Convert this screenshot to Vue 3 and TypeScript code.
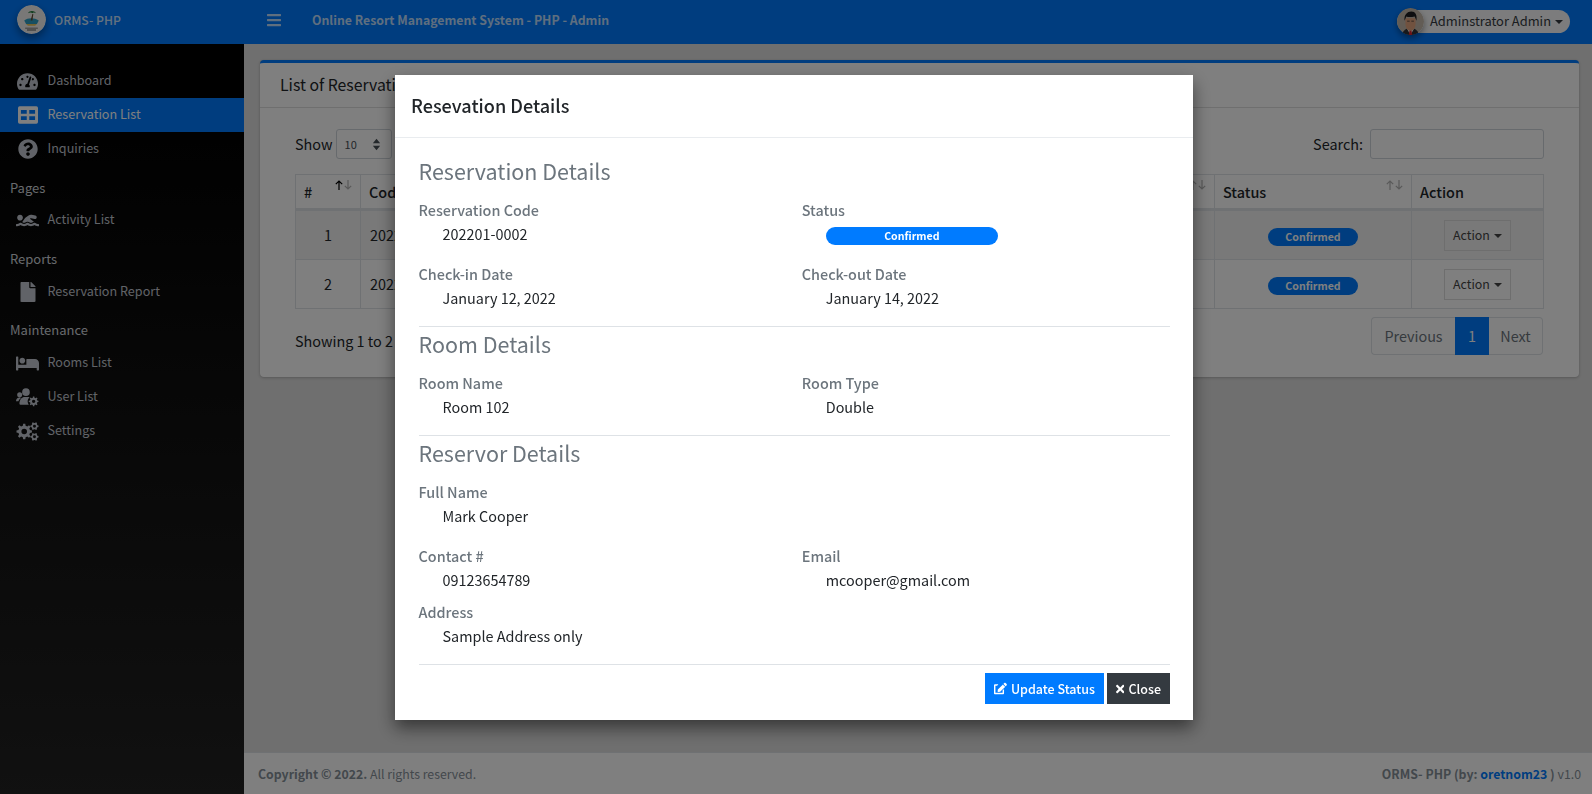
<template>
  <div class="layout">
    <!-- Sidebar -->
    <aside class="sidebar">
      <div class="brand">
        <svg class="brand-logo" viewBox="0 0 32 32">
          <circle cx="16" cy="16" r="16" fill="#f2f1ee" />
          <path d="M8 17c4-3 11-3 16 0l-2 4H10z" fill="#2f9fc4" />
          <path d="M10 21h12l-2 2h-8z" fill="#e8c35a" />
          <path d="M15 17l2-7 1 0-1 7z" fill="#5b4630" />
          <path d="M12 9c2-3 7-3 9 0-2-1-3-1-4 0-1-1-3-1-5 0z" fill="#1f7a3d" />
          <path d="M9 25h14v1H9zm2 2h10v1H11z" fill="#555" />
        </svg>
        <span class="brand-text">ORMS- PHP</span>
      </div>
      <nav class="nav">
        <template
          v-for="entry in navEntries"
          :key="entry.label"
        >
          <div
            v-if="entry.header"
            class="nav-header"
          >
            {{ entry.label }}
          </div>
          <a
            v-else
            class="nav-link"
            :class="{ active: entry.active }"
          >
            <span class="nav-icon">
              <svg
                :viewBox="entry.box"
                :width="entry.size"
                :height="entry.size"
                fill="currentColor"
              >
                <path :d="entry.path" />
              </svg>
            </span>
            <span class="nav-label">{{ entry.label }}</span>
          </a>
        </template>
      </nav>
    </aside>

    <div class="main">
      <!-- Top bar -->
      <header class="navbar">
        <svg
          class="bars"
          viewBox="0 0 448 512"
          fill="currentColor"
        >
          <path d="M16 132h416c8.837 0 16-7.163 16-16V76c0-8.837-7.163-16-16-16H16C7.163 60 0 67.163 0 76v40c0 8.837 7.163 16 16 16zm0 160h416c8.837 0 16-7.163 16-16v-40c0-8.837-7.163-16-16-16H16c-8.837 0-16 7.163-16 16v40c0 8.837 7.163 16 16 16zm0 160h416c8.837 0 16-7.163 16-16v-40c0-8.837-7.163-16-16-16H16c-8.837 0-16 7.163-16 16v40c0 8.837 7.163 16 16 16z" />
        </svg>
        <span class="navbar-title">Online Resort Management System - PHP - Admin</span>
        <div class="user-menu">
          <svg class="avatar" viewBox="0 0 32 32">
            <circle cx="16" cy="16" r="16" fill="#c4b8aa" />
            <path d="M6 32c1-6 5-8 10-8s9 2 10 8z" fill="#2f3238" />
            <path d="M12 25h8l-4 7z" fill="#f4f4f4" />
            <path d="M15 26h2l1 6h-4z" fill="#d8262c" />
            <path d="M10 12h12v7c0 5-3 8-6 8s-6-3-6-8z" fill="#e2a57f" />
            <path d="M9 15c-1-7 3-11 8-11s7 4 6 11l-2-5c-4 1-8 1-10 0z" fill="#1d1d20" />
            <path d="M12 15h3v1h-3zm5 0h3v1h-3z" fill="#33302e" />
          </svg>
          <span class="user-name">Adminstrator Admin</span>
          <span class="caret" />
        </div>
      </header>

      <!-- Page content, behind the modal -->
      <main class="content">
        <section class="card">
          <div class="card-header">
            List of Reservations
          </div>
          <div class="card-body">
            <div class="table-tools">
              <label class="length">Show
                <span class="select">
                  10
                  <svg
                    viewBox="0 0 10 16"
                    width="9"
                    height="13"
                    fill="currentColor"
                  >
                    <path d="M5 1l4.500 5.500H.5zm0 14L.5 9.500h9z" />
                  </svg>
                </span>
              </label>
              <label class="search">Search:
                <span class="search-input" />
              </label>
            </div>
            <table class="table">
              <colgroup>
                <col
                  v-for="col in columns"
                  :key="col.label"
                  :class="col.cls"
                >
              </colgroup>
              <thead>
                <tr>
                  <th
                    v-for="col in columns"
                    :key="col.label"
                  >
                    {{ col.label }}
                    <svg
                      v-if="col.sort"
                      class="sort"
                      viewBox="0 0 17 10"
                      fill="none"
                      stroke="currentColor"
                      stroke-width="1.200"
                    >
                      <path
                        :class="{ on: col.label === '#' }"
                        d="M4 10V1M.8 4.200L4 1l3.200 3.200"
                      />
                      <path d="M13 0v9M9.800 5.800L13 9l3.200-3.200" />
                    </svg>
                  </th>
                </tr>
              </thead>
              <tbody>
                <tr
                  v-for="(row, i) in rows"
                  :key="row.code"
                >
                  <td class="center">
                    {{ i + 1 }}
                  </td>
                  <td>{{ row.code }}</td>
                  <td>{{ row.room }}</td>
                  <td class="center">
                    <span class="badge">Confirmed</span>
                  </td>
                  <td class="center">
                    <span class="action-btn">Action<span class="caret" /></span>
                  </td>
                </tr>
              </tbody>
            </table>
            <div class="table-foot">
              <span class="table-info">Showing 1 to 2 of 2 entries</span>
              <div class="pagination">
                <span class="page prev">Previous</span>
                <span class="page current">1</span>
                <span class="page next">Next</span>
              </div>
            </div>
          </div>
        </section>
      </main>

      <footer class="footer">
        <span><strong>Copyright © 2022.</strong> All rights reserved.</span>
        <span><strong>ORMS- PHP (by: <a class="author">oretnom23</a> )</strong> v1.0</span>
      </footer>
    </div>

    <!-- Modal -->
    <div class="backdrop">
      <div class="modal">
        <div class="modal-header">
          Resevation Details
        </div>
        <div class="modal-body">
          <h4 class="section-title">
            Reservation Details
          </h4>
          <div class="fields">
            <dl class="field">
              <dt>Reservation Code</dt>
              <dd>202201-0002</dd>
            </dl>
            <dl class="field">
              <dt>Status</dt>
              <dd><span class="badge wide">Confirmed</span></dd>
            </dl>
            <dl class="field">
              <dt>Check-in Date</dt>
              <dd>January 12, 2022</dd>
            </dl>
            <dl class="field">
              <dt>Check-out Date</dt>
              <dd>January 14, 2022</dd>
            </dl>
          </div>
          <hr>
          <h4 class="section-title">
            Room Details
          </h4>
          <div class="fields">
            <dl class="field">
              <dt>Room Name</dt>
              <dd>Room 102</dd>
            </dl>
            <dl class="field">
              <dt>Room Type</dt>
              <dd>Double</dd>
            </dl>
          </div>
          <hr>
          <h4 class="section-title">
            Reservor Details
          </h4>
          <div class="fields">
            <dl class="field full">
              <dt>Full Name</dt>
              <dd>Mark Cooper</dd>
            </dl>
            <dl class="field tight">
              <dt>Contact #</dt>
              <dd>09123654789</dd>
            </dl>
            <dl class="field tight">
              <dt>Email</dt>
              <dd>mcooper@gmail.com</dd>
            </dl>
            <dl class="field full">
              <dt>Address</dt>
              <dd>Sample Address only</dd>
            </dl>
          </div>
          <hr>
          <div class="modal-actions">
            <button class="btn primary">
              <svg
                viewBox="0 0 576 512"
                width="17"
                height="15"
                fill="currentColor"
              >
                <path d="M402.6 83.2l90.2 90.2c3.8 3.8 3.8 10 0 13.8L274.4 405.6l-92.8 10.3c-12.4 1.4-22.9-9.1-21.5-21.5l10.3-92.8L388.8 83.2c3.8-3.8 10-3.8 13.8 0zm162-22.9l-48.8-48.8c-15.2-15.2-39.9-15.2-55.2 0l-35.4 35.4c-3.8 3.8-3.8 10 0 13.8l90.2 90.2c3.8 3.8 10 3.8 13.8 0l35.4-35.4c15.2-15.3 15.2-40 0-55.2zM384 346.2V448H64V128h73.1c3.2 0 6.2-1.3 8.5-3.5l40-40c7.6-7.6 2.2-20.5-8.5-20.5H48C21.5 64 0 85.5 0 112v352c0 26.5 21.5 48 48 48h352c26.5 0 48-21.5 48-48V306.2c0-10.7-12.9-16-20.5-8.5l-40 40c-2.2 2.3-3.5 5.3-3.5 8.5z" />
              </svg>
              Update Status
            </button>
            <button class="btn dark">
              <svg
                viewBox="0 80 352 352"
                width="12"
                height="12"
                fill="currentColor"
              >
                <path d="M242.72 256l100.07-100.07c12.28-12.28 12.28-32.19 0-44.48l-22.24-22.24c-12.28-12.28-32.19-12.28-44.48 0L176 189.28 75.93 89.21c-12.28-12.28-32.19-12.28-44.48 0L9.21 111.45c-12.28 12.28-12.28 32.19 0 44.48L109.28 256 9.21 356.07c-12.28 12.28-12.28 32.19 0 44.48l22.24 22.24c12.28 12.28 32.2 12.28 44.48 0L176 322.72l100.07 100.07c12.28 12.28 32.2 12.28 44.48 0l22.24-22.24c12.28-12.28 12.28-32.19 0-44.48L242.72 256z" />
              </svg>
              Close
            </button>
          </div>
        </div>
      </div>
    </div>
  </div>
</template>

<script setup lang="ts">
interface NavEntry {
  label: string
  header?: boolean
  active?: boolean
  box?: string
  size?: number
  path?: string
}

// teeth of a gear as a single path, with a hole in the middle
function gear(cx: number, cy: number, r: number, hole: number, teeth = 8): string {
  const pts: string[] = []
  const step = (Math.PI * 2) / teeth
  for (let i = 0; i < teeth; i++) {
    const a = i * step
    const offsets: [number, number][] = [
      [-0.3, 0.76],
      [-0.17, 1],
      [0.17, 1],
      [0.3, 0.76],
    ]
    for (const [o, k] of offsets) {
      const x = cx + Math.cos(a + o * step) * r * k
      const y = cy + Math.sin(a + o * step) * r * k
      pts.push(`${x.toFixed(1)} ${y.toFixed(1)}`)
    }
  }
  const ring = `M${cx - hole} ${cy}a${hole} ${hole} 0 1 0 ${hole * 2} 0a${hole} ${hole} 0 1 0 ${-hole * 2} 0z`
  return `M${pts.join('L')}z${ring}`
}

const usersCog =
  'M8 5a5 5 0 1 1 10 0a5 5 0 1 1-10 0z' +
  'M1.500 8.500a3.300 3.300 0 1 1 6.600 0a3.300 3.300 0 1 1-6.600 0z' +
  'M0 17c0-3 2-5 4.500-5 .8 0 1.500.2 2 .5-1.500 1.200-3 2.800-3.300 4.500H0z' +
  'M4.500 20c0-5 3-8.500 7-8.500h4c.8 0 1.500.1 2.200.4-1.500 1-2.500 2.900-2.500 5.100 0 1.700.6 3.300 1.600 4.500H6.500c-1.200 0-2-.8-2-1.500z' +
  gear(23, 17, 6.400, 2.200)

const cogs = gear(10, 12.5, 9.5, 3.400) + gear(22.5, 6, 5, 1.800, 6) + gear(22.5, 19, 5, 1.800, 6)

const navEntries: NavEntry[] = [
  {
    label: 'Dashboard',
    box: '0 0 576 512',
    size: 21,
    path: 'M288 32C128.94 32 0 160.94 0 320c0 52.8 14.25 102.26 39.06 144.8 5.61 9.62 16.3 15.2 27.44 15.2h443c11.14 0 21.83-5.58 27.44-15.2C561.75 422.26 576 372.8 576 320c0-159.06-128.94-288-288-288zm0 64c14.71 0 26.58 10.13 30.32 23.65-1.11 2.26-2.64 4.23-3.45 6.67l-9.22 27.67c-5.13 3.49-10.97 6.01-17.64 6.01-17.67 0-32-14.33-32-32S270.33 96 288 96zM96 384c-17.67 0-32-14.33-32-32s14.33-32 32-32 32 14.33 32 32-14.33 32-32 32zm48-160c-17.67 0-32-14.33-32-32s14.33-32 32-32 32 14.33 32 32-14.33 32-32 32zm246.77-72.41l-61.33 184C343.13 347.33 352 364.54 352 384c0 11.72-3.38 22.55-8.88 32H232.88c-5.5-9.45-8.88-20.28-8.88-32 0-33.94 26.5-61.43 59.9-63.59l61.34-184.01c4.17-12.56 17.73-19.45 30.36-15.17 12.57 4.19 19.35 17.79 15.17 30.36zm14.66 57.2l15.52-46.55c3.47-1.29 7.13-2.23 11.05-2.23 17.67 0 32 14.33 32 32s-14.33 32-32 32c-11.38-.01-20.89-6.28-26.57-15.22zM480 384c-17.67 0-32-14.33-32-32s14.33-32 32-32 32 14.33 32 32-14.33 32-32 32z',
  },
  {
    label: 'Reservation List',
    active: true,
    box: '0 0 24 24',
    size: 20,
    path: 'M2 1.500h20a2 2 0 0 1 2 2v17a2 2 0 0 1-2 2H2a2 2 0 0 1-2-2v-17a2 2 0 0 1 2-2zM3.500 6v4.500h7V6zm10 0v4.500h7V6zm-10 7.500V18h7v-4.500zm10 0V18h7v-4.500z',
  },
  {
    label: 'Inquiries',
    box: '0 0 512 512',
    size: 20,
    path: 'M504 256c0 136.997-111.043 248-248 248S8 392.997 8 256C8 119.083 119.043 8 256 8s248 111.083 248 248zM262.655 90c-54.497 0-89.255 22.957-116.549 63.758-3.536 5.286-2.353 12.415 2.715 16.258l34.699 26.31c5.205 3.947 12.621 3.008 16.665-2.122 17.864-22.658 30.113-35.797 57.303-35.797 20.429 0 45.698 13.148 45.698 32.958 0 14.976-12.363 22.667-32.534 33.976C247.128 238.528 216 254.941 216 296v4c0 6.627 5.373 12 12 12h56c6.627 0 12-5.373 12-12v-1.333c0-28.462 83.186-29.647 83.186-106.667 0-58.002-60.165-102-116.531-102zM256 338c-25.365 0-46 20.635-46 46 0 25.364 20.635 46 46 46s46-20.636 46-46c0-25.365-20.635-46-46-46z',
  },
  { label: 'Pages', header: true },
  {
    label: 'Activity List',
    box: '0 0 640 512',
    size: 23,
    path: 'M189.61 310.58c3.54 3.26 15.27 9.42 34.39 9.42s30.86-6.16 34.39-9.42c16.02-14.77 34.5-22.58 53.46-22.58h16.3c18.96 0 37.45 7.81 53.46 22.58 3.54 3.26 15.27 9.42 34.39 9.42s30.86-6.16 34.39-9.42c14.86-13.71 31.88-21.12 49.39-22.16l-112.84-80.6 18-12.86c3.64-2.58 8.28-3.52 12.62-2.61l100.35 21.53c25.91 5.53 51.44-10.97 57-36.88 5.55-25.92-10.95-51.44-36.88-57L437.68 98.47c-30.73-6.58-63.02.12-88.56 18.38l-80.02 57.17c-10.38 7.39-19.36 16.44-26.72 26.94L173.75 299c5.47 3.23 10.82 6.93 15.86 11.58zM624 352h-16c-26.04 0-45.8-8.42-56.09-17.9-8.9-8.21-19.66-14.1-31.77-14.1h-16.3c-12.11 0-22.87 5.89-31.77 14.1C461.8 343.58 442.04 352 416 352s-45.8-8.42-56.09-17.9c-8.9-8.21-19.66-14.1-31.77-14.1h-16.3c-12.11 0-22.87 5.89-31.77 14.1C269.8 343.58 250.04 352 224 352s-45.8-8.42-56.09-17.9c-8.9-8.21-19.66-14.1-31.77-14.1h-16.3c-12.11 0-22.87 5.89-31.77 14.1C77.8 343.58 58.04 352 32 352H16c-8.84 0-16 7.16-16 16v32c0 8.84 7.16 16 16 16h16c38.62 0 72.72-12.19 96-31.84 23.28 19.66 57.38 31.84 96 31.84s72.72-12.19 96-31.84c23.28 19.66 57.38 31.84 96 31.84s72.72-12.19 96-31.84c23.28 19.66 57.38 31.84 96 31.84h16c8.84 0 16-7.16 16-16v-32c0-8.84-7.16-16-16-16zm-512-96c44.18 0 80-35.82 80-80s-35.82-80-80-80-80 35.82-80 80 35.82 80 80 80z',
  },
  { label: 'Reports', header: true },
  {
    label: 'Reservation Report',
    box: '0 0 384 512',
    size: 20,
    path: 'M224 136V0H24C10.7 0 0 10.7 0 24v464c0 13.3 10.7 24 24 24h336c13.3 0 24-10.7 24-24V160H248c-13.2 0-24-10.8-24-24zm160-14.1v6.1H256V0h6.1c6.4 0 12.5 2.5 17 7l97.9 98c4.5 4.5 7 10.6 7 16.9z',
  },
  { label: 'Maintenance', header: true },
  {
    label: 'Rooms List',
    box: '0 0 640 512',
    size: 23,
    path: 'M176 256c44.11 0 80-35.89 80-80s-35.89-80-80-80-80 35.89-80 80 35.89 80 80 80zm352-128H304c-8.84 0-16 7.16-16 16v144H64V80c0-8.84-7.16-16-16-16H16C7.16 64 0 71.16 0 80v352c0 8.84 7.16 16 16 16h32c8.84 0 16-7.16 16-16v-48h512v48c0 8.84 7.16 16 16 16h32c8.84 0 16-7.16 16-16V240c0-61.86-50.14-112-112-112z',
  },
  { label: 'User List', box: '0 0 30 24', size: 23, path: usersCog },
  { label: 'Settings', box: '0 0 28 25', size: 23, path: cogs },
]

const columns = [
  { label: '#', cls: 'col-num', sort: true },
  { label: 'Code', cls: 'col-code', sort: true },
  { label: 'Room', cls: 'col-room', sort: true },
  { label: 'Status', cls: 'col-status', sort: true },
  { label: 'Action', cls: 'col-action', sort: false },
]

const rows = [
  { code: '202201-0002', room: 'Room 102' },
  { code: '202201-0001', room: 'Room 101' },
]
</script>

<style>
html,
body {
  margin: 0;
  height: 100%;
  overflow: hidden;
}
</style>

<style scoped>
.layout {
  display: flex;
  height: 794px;
  font-family: "Noto Sans CJK SC", "Noto Sans", sans-serif;
  font-size: 14.4px;
  line-height: 24px;
  color: #212529;
}

.sidebar {
  width: 244px;
  flex-shrink: 0;
  background: linear-gradient(#000 10%, #222);
  color: #c2c7d0;
}

.brand {
  height: 44px;
  box-sizing: border-box;
  background: #007bff;
  display: flex;
  align-items: center;
  padding-left: 17px;
  gap: 8px;
}

.brand-logo {
  width: 29px;
  height: 29px;
  border-radius: 50%;
  box-shadow: 0 4px 8px rgba(0, 0, 0, 0.4);
  margin-top: -6px;
}

.brand-text {
  color: rgba(255, 255, 255, 0.8);
  font-size: 12.2px;
  font-weight: 500;
  margin-top: -5px;
}

.nav {
  padding-top: 20px;
}

.nav-link {
  height: 34px;
  display: flex;
  align-items: center;
  font-size: 12.6px;
  color: #c2c7d0;
}

.nav-label {
  padding-bottom: 2px;
}

.nav-link.active {
  background: #007bff;
  color: #fff;
}

.nav-icon {
  width: 47.5px;
  padding-left: 8px;
  box-sizing: border-box;
  display: flex;
  justify-content: center;
  flex-shrink: 0;
}

.nav-header {
  height: 37.4px;
  box-sizing: border-box;
  padding: 9.5px 0 0 10px;
  font-size: 13px;
  line-height: 24px;
  color: #d0d4db;
}

.main {
  flex: 1;
  min-width: 0;
  display: flex;
  flex-direction: column;
  background: #dedede;
}

.navbar {
  height: 44px;
  flex-shrink: 0;
  box-sizing: border-box;
  background: #007bff;
  display: flex;
  align-items: center;
  padding: 0 22px 4px 23px;
  color: rgba(255, 255, 255, 0.75);
}

.bars {
  width: 14px;
  height: 16px;
}

.navbar-title {
  margin-left: 31px;
  font-size: 12.3px;
  font-weight: 700;
}

.user-menu {
  margin-left: auto;
  height: 23px;
  padding-right: 7px;
  background: #f8f9fa;
  border-radius: 12px;
  display: flex;
  align-items: center;
  margin-top: 3px;
  color: #343a40;
  font-size: 12.9px;
}

.user-name {
  padding-bottom: 2px;
}

.avatar {
  width: 27px;
  height: 27px;
  border-radius: 50%;
  box-shadow: 0 3px 6px rgba(0, 0, 0, 0.4);
  margin-right: 6px;
}

.caret {
  display: inline-block;
  margin-left: 4px;
  border-top: 4.8px solid currentColor;
  border-left: 4.8px solid transparent;
  border-right: 4.8px solid transparent;
  vertical-align: 2px;
}

.content {
  flex: 1;
  padding: 16px 13px 0 16px;
}

.card {
  background: #fff;
  border-top: 3px solid #007bff;
  border-radius: 4px;
  box-shadow: 0 0 1px rgba(0, 0, 0, 0.125), 0 1px 3px rgba(0, 0, 0, 0.2);
  height: 317px;
  box-sizing: border-box;
}

.card-header {
  height: 45px;
  box-sizing: border-box;
  padding: 10px 20px;
  border-bottom: 1px solid rgba(0, 0, 0, 0.125);
  font-size: 15.8px;
}

.card-body {
  padding: 21px 35px 0;
}

.table-tools {
  display: flex;
  justify-content: space-between;
  height: 45px;
}

.length,
.search {
  display: flex;
  align-items: center;
  height: 30px;
}

.length {
  gap: 3px;
}

.search {
  gap: 7px;
}

.select {
  width: 56px;
  height: 30px;
  box-sizing: border-box;
  border: 1px solid #ced4da;
  border-radius: 3px;
  font-size: 11px;
  color: #495057;
  display: flex;
  align-items: center;
  justify-content: space-between;
  padding: 0 10px 0 8px;
}

.search-input {
  width: 174px;
  height: 30px;
  box-sizing: border-box;
  border: 1px solid #ced4da;
  border-radius: 3px;
}

.table {
  width: 100%;
  table-layout: fixed;
  border-collapse: collapse;
}

.col-num {
  width: 65px;
}

.col-code {
  width: 420px;
}

.col-status {
  width: 197px;
}

.col-action {
  width: 132px;
}

.table th,
.table td {
  border: 1px solid #dee2e6;
  padding: 0 8px;
  text-align: left;
  white-space: nowrap;
  overflow: hidden;
}

.table th {
  position: relative;
  height: 33px;
  border-bottom-width: 3px;
  font-weight: 500;
}

.table td {
  height: 48px;
  padding: 0 9px;
}

.table td.center {
  text-align: center;
}

.table tbody tr:first-child {
  background: rgba(0, 0, 0, 0.05);
}

.sort {
  position: absolute;
  top: 5px;
  right: 8px;
  width: 17px;
  height: 10px;
  color: rgba(0, 0, 0, 0.3);
}

.sort .on {
  stroke: #000;
}

.badge {
  display: inline-block;
  width: 90px;
  height: 18px;
  line-height: 18px;
  border-radius: 10px;
  background: #007bff;
  color: #fff;
  font-size: 10.6px;
  font-weight: 700;
  text-align: center;
  vertical-align: middle;
}

.badge.wide {
  width: 50%;
  vertical-align: top;
  margin-top: 5px;
}

.action-btn {
  display: inline-block;
  width: 67px;
  height: 31px;
  box-sizing: border-box;
  border: 1px solid #ddd;
  font-size: 12.4px;
  line-height: 28px;
  color: #444;
  vertical-align: middle;
}

.table-foot {
  display: flex;
  justify-content: space-between;
  align-items: center;
  margin-top: 8px;
}

.table-info {
  padding-top: 9px;
}

.pagination {
  display: flex;
  height: 38px;
  box-sizing: border-box;
  margin-right: 1px;
  color: #6c757d;
}

.page {
  display: flex;
  align-items: center;
  justify-content: center;
  box-sizing: border-box;
  border: 1px solid #dee2e6;
}

.prev {
  width: 84px;
  border-right: 0;
  border-radius: 4px 0 0 4px;
}

.current {
  width: 34px;
  background: #007bff;
  border-color: #007bff;
  color: #fff;
}

.next {
  width: 54px;
  border-left: 0;
  border-radius: 0 4px 4px 0;
}

.footer {
  height: 42px;
  flex-shrink: 0;
  box-sizing: border-box;
  background: #fff;
  border-top: 1px solid #dee2e6;
  display: flex;
  justify-content: space-between;
  align-items: center;
  padding: 0 11px 0 14px;
  font-size: 12.3px;
  color: #869099;
}

.footer strong {
  font-weight: 700;
}

.author {
  color: #007bff;
}

.backdrop {
  position: fixed;
  inset: 0;
  background: rgba(0, 0, 0, 0.5);
  padding-right: 4px;
  display: flex;
  justify-content: center;
  align-items: flex-start;
}

.modal {
  width: 798px;
  margin-top: 75px;
  background: #fff;
  box-shadow: 0 8px 16px rgba(0, 0, 0, 0.5);
}

.modal-header {
  height: 63px;
  box-sizing: border-box;
  padding: 0 16px;
  border-bottom: 1px solid #e9ecef;
  font-size: 18.1px;
  font-weight: 500;
  line-height: 61px;
}

.modal-body {
  padding: 18px 23px 16px 23.5px;
}

.section-title {
  margin: 0 0 13px;
  font-size: 21.5px;
  font-weight: 400;
  line-height: 29px;
  color: #6c757d;
}

.fields {
  display: grid;
  grid-template-columns: 1fr 1fr;
  column-gap: 15px;
}

.field {
  margin: 0 0 16px;
}

.field.tight {
  margin-bottom: 8px;
}

.field.full {
  grid-column: 1 / -1;
}

.field dt {
  color: #6c757d;
  font-weight: 500;
}

.field dd {
  margin: 0;
  padding-left: 24px;
}

hr {
  border: 0;
  border-top: 1px solid #dee2e6;
  margin: 0 0 2px;
}

.modal-actions {
  display: flex;
  justify-content: flex-end;
  gap: 3px;
  margin-top: 8px;
}

.btn {
  height: 31px;
  border: 0;
  padding: 0 9px;
  display: flex;
  align-items: center;
  gap: 4px;
  font-family: inherit;
  font-size: 12.5px;
  font-weight: 500;
  white-space: nowrap;
  color: #fff;
}

.primary {
  width: 119px;
  background: #007bff;
}

.dark {
  width: 63px;
  background: #343a40;
}
</style>
